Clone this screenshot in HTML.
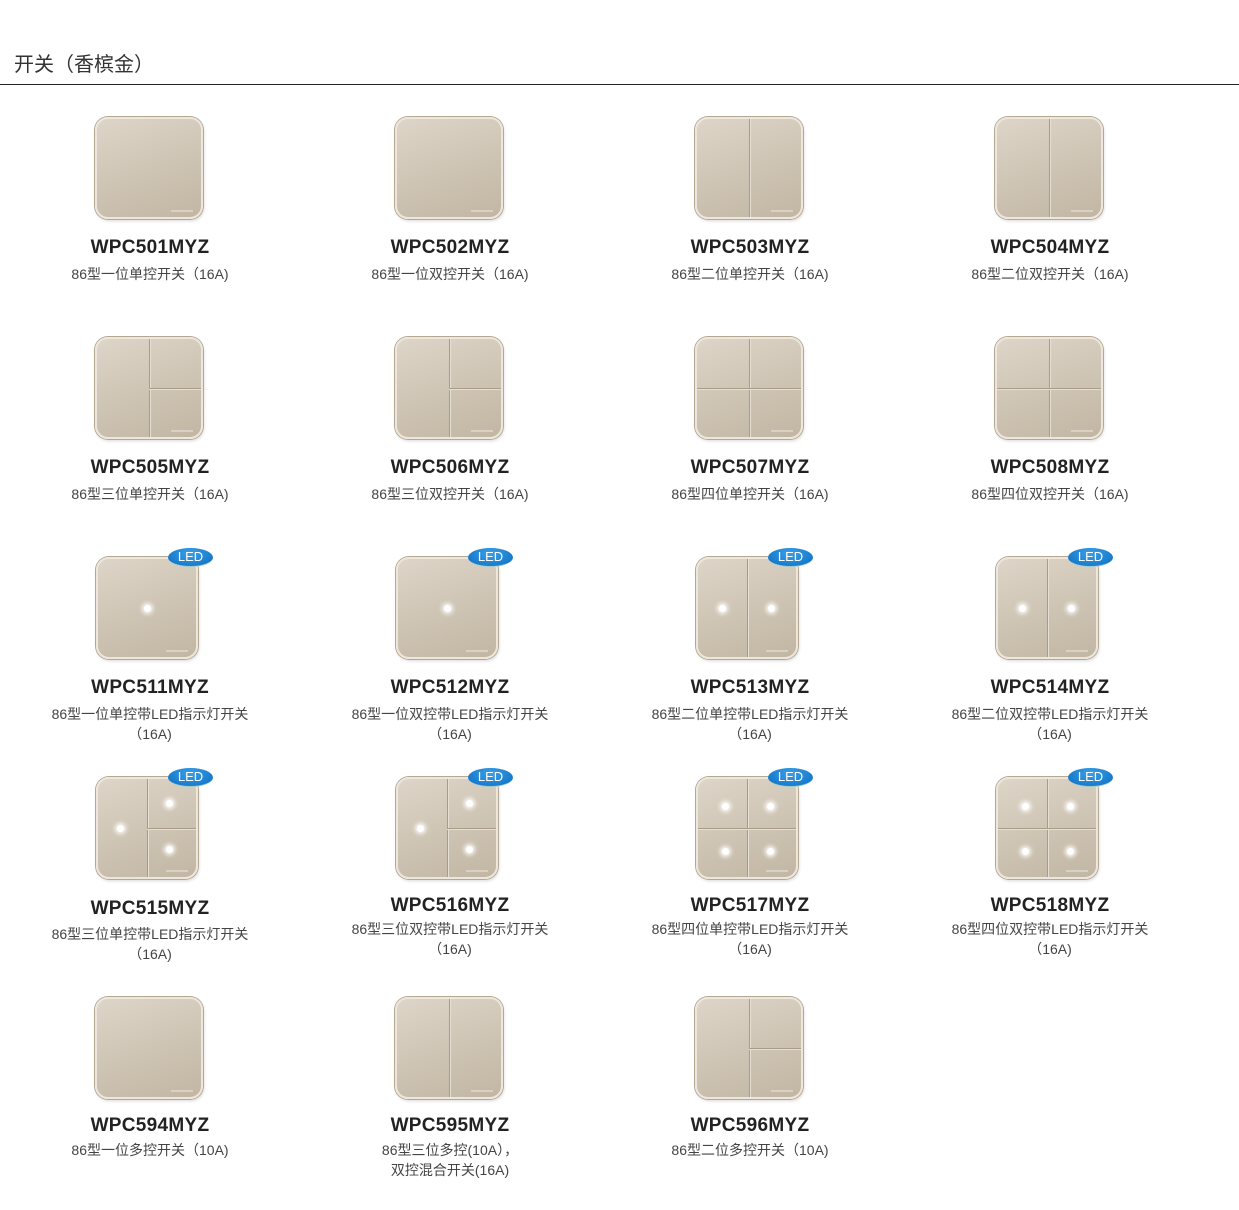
<!DOCTYPE html>
<html><head><meta charset="utf-8"><style>
body{margin:0;width:1239px;height:1203px;background:#fff;position:relative;overflow:hidden;font-family:"Liberation Sans","Noto Sans CJK SC",sans-serif;}
.hd{position:absolute;left:14px;top:48px;font-size:20px;color:#333;}
.hr{position:absolute;left:0;top:84px;width:1239px;height:1px;background:#222;}
.it{position:absolute;width:300px;height:220px;}
.sw{position:absolute;left:95px;top:7px;width:104px;height:98px;border-radius:13px;background:linear-gradient(160deg,#ddd5c8 0%,#cfc5b5 50%,#c2b6a3 100%);border:2px solid #ece6dc;box-shadow:0 0 0 1px #b5a893,1px 2px 3px rgba(0,0,0,.15);overflow:hidden;}
.led .sw{left:96px;width:98px;height:98px;top:7px;}
.v{position:absolute;left:50%;top:0;bottom:0;width:1px;background:#a89b87;box-shadow:1px 0 0 #e6dfd3;}
.h{position:absolute;top:50%;height:1px;background:#a89b87;box-shadow:0 1px 0 #e6dfd3;}
.hr2{left:50%;right:0;}.hf{left:0;right:0;}
.d{position:absolute;width:7px;height:7px;margin:-3.5px 0 0 -3.5px;border-radius:50%;background:#fff;box-shadow:0 0 4px 2px rgba(255,255,255,.9);}
.b{position:absolute;left:168px;top:-2px;width:45px;height:18px;border-radius:50%;background:radial-gradient(ellipse at 50% 30%,#3aa0e8,#0a6cc0);color:#fff;font-size:13px;line-height:18px;text-align:center;border-bottom:1px solid #9cc;}
.t{position:absolute;left:0;width:300px;top:127px;text-align:center;font-weight:bold;font-size:19px;color:#222;letter-spacing:.3px;}
.s{position:absolute;left:0;width:300px;top:154px;text-align:center;font-size:14px;color:#444;line-height:20px;}
.logo{position:absolute;right:8px;bottom:5px;width:22px;height:2px;background:#d9d1c4;}
</style></head><body>
<div class="hd">开关（香槟金）</div><div class="hr"></div>

<div class="it" style="left:0;top:110px"><div class="sw"><i class="logo"></i></div><div class="t">WPC501MYZ</div><div class="s">86型一位单控开关（16A)</div></div>
<div class="it" style="left:300px;top:110px"><div class="sw"><i class="logo"></i></div><div class="t">WPC502MYZ</div><div class="s">86型一位双控开关（16A)</div></div>
<div class="it" style="left:600px;top:110px"><div class="sw"><i class="v"></i><i class="logo"></i></div><div class="t">WPC503MYZ</div><div class="s">86型二位单控开关（16A)</div></div>
<div class="it" style="left:900px;top:110px"><div class="sw"><i class="v"></i><i class="logo"></i></div><div class="t">WPC504MYZ</div><div class="s">86型二位双控开关（16A)</div></div>

<div class="it" style="left:0;top:330px"><div class="sw"><i class="v"></i><i class="h hr2"></i><i class="logo"></i></div><div class="t">WPC505MYZ</div><div class="s">86型三位单控开关（16A)</div></div>
<div class="it" style="left:300px;top:330px"><div class="sw"><i class="v"></i><i class="h hr2"></i><i class="logo"></i></div><div class="t">WPC506MYZ</div><div class="s">86型三位双控开关（16A)</div></div>
<div class="it" style="left:600px;top:330px"><div class="sw"><i class="v"></i><i class="h hf"></i><i class="logo"></i></div><div class="t">WPC507MYZ</div><div class="s">86型四位单控开关（16A)</div></div>
<div class="it" style="left:900px;top:330px"><div class="sw"><i class="v"></i><i class="h hf"></i><i class="logo"></i></div><div class="t">WPC508MYZ</div><div class="s">86型四位双控开关（16A)</div></div>

<div class="it led" style="left:0;top:550px"><div class="sw"><i class="d" style="left:50%;top:50%"></i><i class="logo"></i></div><div class="b">LED</div><div class="t">WPC511MYZ</div><div class="s">86型一位单控带LED指示灯开关<br>（16A)</div></div>
<div class="it led" style="left:300px;top:550px"><div class="sw"><i class="d" style="left:50%;top:50%"></i><i class="logo"></i></div><div class="b">LED</div><div class="t">WPC512MYZ</div><div class="s">86型一位双控带LED指示灯开关<br>（16A)</div></div>
<div class="it led" style="left:600px;top:550px"><div class="sw"><i class="v"></i><i class="d" style="left:25%;top:50%"></i><i class="d" style="left:75%;top:50%"></i><i class="logo"></i></div><div class="b">LED</div><div class="t">WPC513MYZ</div><div class="s">86型二位单控带LED指示灯开关<br>（16A)</div></div>
<div class="it led" style="left:900px;top:550px"><div class="sw"><i class="v"></i><i class="d" style="left:25%;top:50%"></i><i class="d" style="left:75%;top:50%"></i><i class="logo"></i></div><div class="b">LED</div><div class="t">WPC514MYZ</div><div class="s">86型二位双控带LED指示灯开关<br>（16A)</div></div>

<div class="it led" style="left:0;top:770px"><div class="sw"><i class="v"></i><i class="h hr2"></i><i class="d" style="left:23%;top:50%"></i><i class="d" style="left:73%;top:25%"></i><i class="d" style="left:73%;top:72%"></i><i class="logo"></i></div><div class="b">LED</div><div class="t" style="top:128px">WPC515MYZ</div><div class="s" style="top:154px">86型三位单控带LED指示灯开关<br>（16A)</div></div>
<div class="it led" style="left:300px;top:770px"><div class="sw"><i class="v"></i><i class="h hr2"></i><i class="d" style="left:23%;top:50%"></i><i class="d" style="left:73%;top:25%"></i><i class="d" style="left:73%;top:72%"></i><i class="logo"></i></div><div class="b">LED</div><div class="t" style="top:125px">WPC516MYZ</div><div class="s" style="top:149px">86型三位双控带LED指示灯开关<br>（16A)</div></div>
<div class="it led" style="left:600px;top:770px"><div class="sw"><i class="v"></i><i class="h hf"></i><i class="d" style="left:28%;top:28%"></i><i class="d" style="left:74%;top:28%"></i><i class="d" style="left:28%;top:74%"></i><i class="d" style="left:74%;top:74%"></i><i class="logo"></i></div><div class="b">LED</div><div class="t" style="top:125px">WPC517MYZ</div><div class="s" style="top:149px">86型四位单控带LED指示灯开关<br>（16A)</div></div>
<div class="it led" style="left:900px;top:770px"><div class="sw"><i class="v"></i><i class="h hf"></i><i class="d" style="left:28%;top:28%"></i><i class="d" style="left:74%;top:28%"></i><i class="d" style="left:28%;top:74%"></i><i class="d" style="left:74%;top:74%"></i><i class="logo"></i></div><div class="b">LED</div><div class="t" style="top:125px">WPC518MYZ</div><div class="s" style="top:149px">86型四位双控带LED指示灯开关<br>（16A)</div></div>

<div class="it" style="left:0;top:990px"><div class="sw"><i class="logo"></i></div><div class="t" style="top:125px">WPC594MYZ</div><div class="s" style="top:150px">86型一位多控开关（10A)</div></div>
<div class="it" style="left:300px;top:990px"><div class="sw"><i class="v"></i><i class="logo"></i></div><div class="t" style="top:125px">WPC595MYZ</div><div class="s" style="top:150px">86型三位多控(10A），<br>双控混合开关(16A)</div></div>
<div class="it" style="left:600px;top:990px"><div class="sw"><i class="v"></i><i class="h hr2"></i><i class="logo"></i></div><div class="t" style="top:125px">WPC596MYZ</div><div class="s" style="top:150px">86型二位多控开关（10A)</div></div>
</body></html>
